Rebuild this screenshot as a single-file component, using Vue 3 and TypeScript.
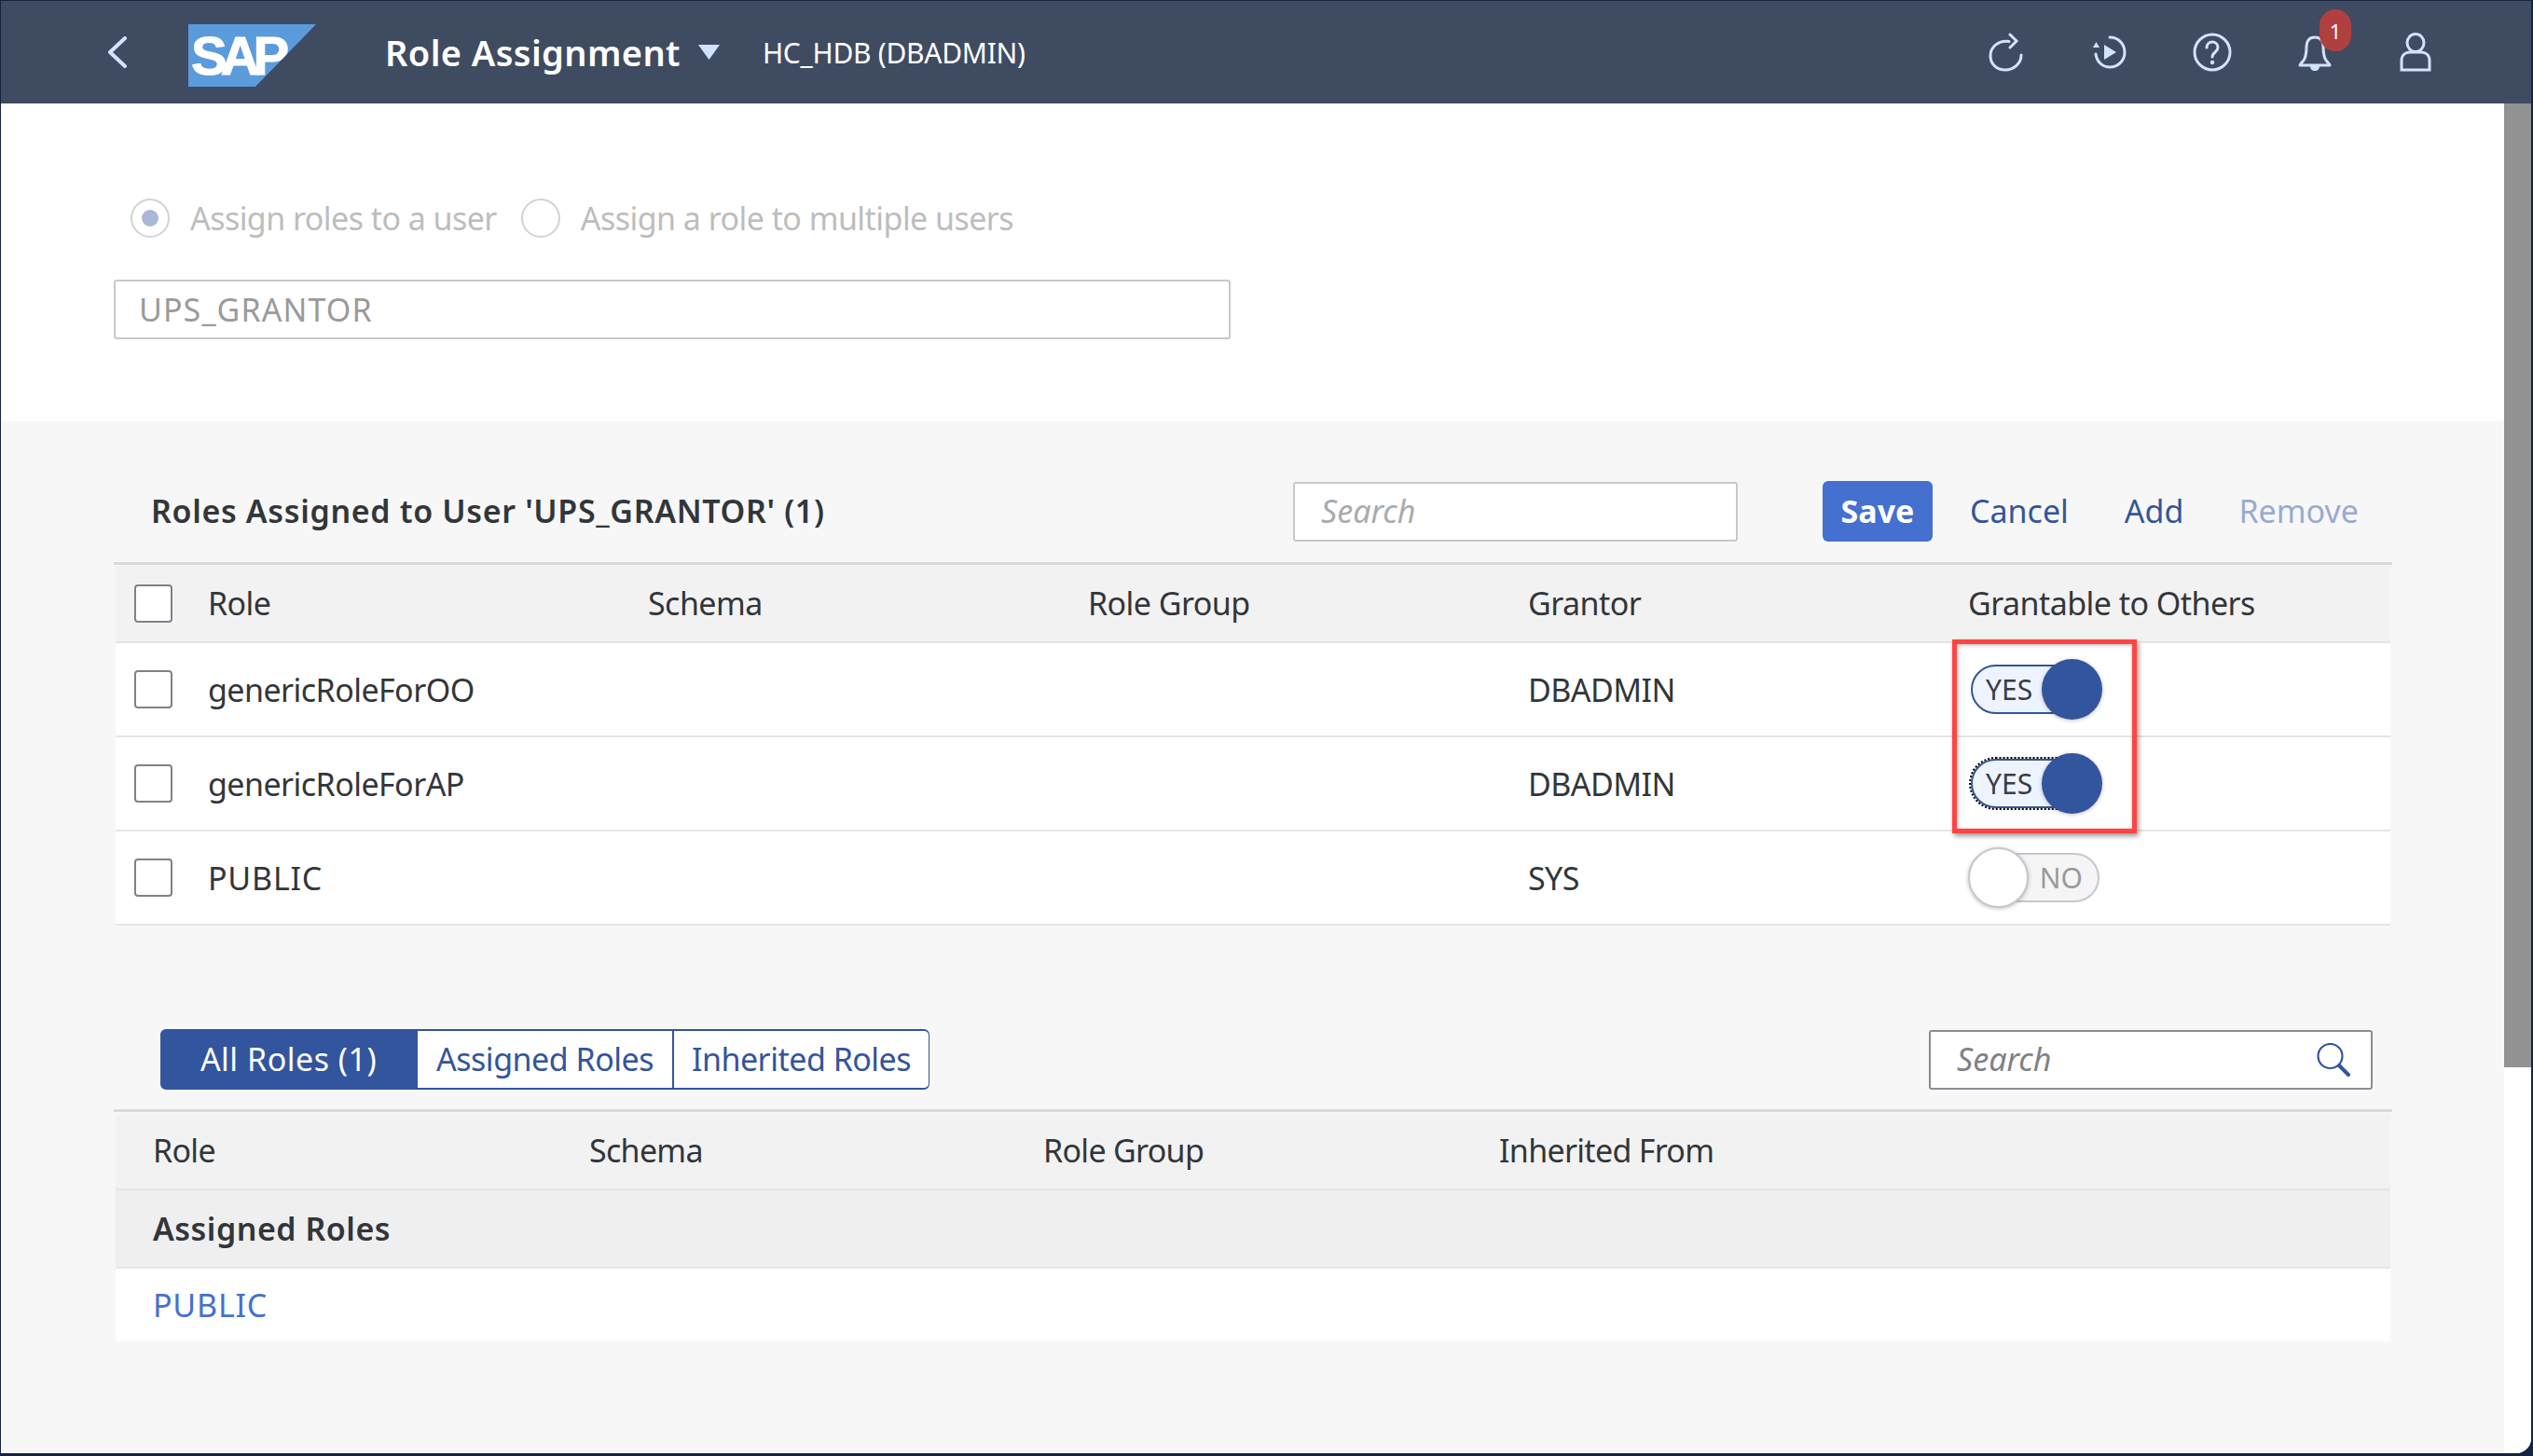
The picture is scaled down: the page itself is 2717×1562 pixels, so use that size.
<script setup lang="ts">
interface AssignedRole { name: string; grantor: string; grantable: boolean; focused?: boolean }

const columns = ['Role', 'Schema', 'Role Group', 'Grantor', 'Grantable to Others']
const roles: AssignedRole[] = [
  { name: 'genericRoleForOO', grantor: 'DBADMIN', grantable: true },
  { name: 'genericRoleForAP', grantor: 'DBADMIN', grantable: true, focused: true },
  { name: 'PUBLIC', grantor: 'SYS', grantable: false },
]
const tabs = ['All Roles (1)', 'Assigned Roles', 'Inherited Roles']
const detailColumns = ['Role', 'Schema', 'Role Group', 'Inherited From']
</script>

<template>
  <div class="window">
    <div class="frame">
      <header class="shell">
        <svg class="back" width="22" height="34" viewBox="0 0 22 34"><path d="M19 2 3 17l16 15" fill="none" stroke="#d1e3ff" stroke-width="4" stroke-linecap="round" stroke-linejoin="round" /></svg>
        <div class="logo"><span>SAP</span></div>
        <h1 class="title">Role Assignment</h1>
        <svg class="caret" width="23" height="16" viewBox="0 0 23 16"><path d="M0 0h23L11.500 16z" fill="#d1e3ff" /></svg>
        <span class="system">HC_HDB (DBADMIN)</span>
        <div class="actions">
          <svg class="ic" width="40" height="42" viewBox="0 0 40 42" fill="none" stroke="#d1e3ff" stroke-width="3" stroke-linecap="round">
            <path d="M23 9.500C12 8 3 15 3 25c0 9 7 15 16 15s17-7 17-16" />
            <path d="M24 2l7 7-7 7" />
          </svg>
          <svg class="ic" width="40" height="42" viewBox="0 0 40 42" fill="none" stroke="#d1e3ff" stroke-width="3" stroke-linecap="round">
            <path d="M21 5c9 0 16 7 16 16s-7 16-16 16c-8 0-14-6-15-14" />
            <path d="M3 16h7l-3.500-6z" fill="#d1e3ff" stroke="none" />
            <path d="M15 13l13 8-13 8z" fill="#d1e3ff" stroke="none" />
          </svg>
          <svg class="ic" width="42" height="42" viewBox="0 0 42 42" fill="none" stroke="#d1e3ff" stroke-width="3" stroke-linecap="round">
            <circle cx="21" cy="21" r="19" />
            <path d="M15 16c0-4 3-6 6-6s6 2 6 6c0 5-6 5-6 10" />
            <circle cx="21" cy="32" r="2.200" fill="#d1e3ff" stroke="none" />
          </svg>
          <div class="bell">
            <svg width="38" height="42" viewBox="0 0 38 42" fill="none" stroke="#d1e3ff" stroke-width="3" stroke-linecap="round" stroke-linejoin="round">
              <path d="M19 5c-6 0-9 4-9 10 0 9-1 13-4 16-2 2-3 3-3 4h32c0-1-1-2-3-4-3-3-4-7-4-16 0-6-3-10-9-10z" />
              <path d="M14 36h10c0 3-2 5-5 5s-5-2-5-5z" fill="#d1e3ff" stroke="none" />
            </svg>
            <span class="badge">1</span>
          </div>
          <svg class="ic user" width="34" height="42" viewBox="0 0 34 42" fill="none" stroke="#d1e3ff" stroke-width="3">
            <ellipse cx="17" cy="11" rx="9" ry="9.500" />
            <path d="M2 40V30c0-6 4-9 9-9h12c5 0 9 3 9 9v10z" />
          </svg>
        </div>
      </header>

      <div class="body">
        <main class="page">
          <section class="assign">
            <div class="radios">
              <label class="radio"><i class="dot on"></i>Assign roles to a user</label>
              <label class="radio"><i class="dot"></i>Assign a role to multiple users</label>
            </div>
            <div class="user-input">UPS_GRANTOR</div>
          </section>

          <section class="lower">
            <div class="toolbar">
              <h2 class="section-title">Roles Assigned to User 'UPS_GRANTOR' (1)</h2>
              <div class="search small">Search</div>
              <button class="save">Save</button>
              <a class="link cancel">Cancel</a>
              <a class="link add">Add</a>
              <a class="link remove">Remove</a>
            </div>

            <div class="table">
              <div class="row head">
                <i class="check"></i>
                <span v-for="c in columns" :key="c">{{ c }}</span>
              </div>
              <div class="rows">
                <div v-for="r in roles" :key="r.name" class="row">
                  <i class="check"></i>
                  <span :class="{ caps: r.name === r.name.toUpperCase() }">{{ r.name }}</span>
                  <span></span>
                  <span></span>
                  <span>{{ r.grantor }}</span>
                  <span class="cell-toggle">
                    <span class="toggle" :class="{ off: !r.grantable, focused: r.focused }">
                      <span class="track">{{ r.grantable ? 'YES' : 'NO' }}</span>
                      <span class="knob"></span>
                    </span>
                  </span>
                </div>
                <div class="callout"></div>
              </div>
            </div>

            <div class="toolbar second">
              <div class="segments">
                <button v-for="(t, i) in tabs" :key="t" class="segment" :class="{ active: i === 0 }">{{ t }}</button>
              </div>
              <div class="search big">
                <span>Search</span>
                <svg width="36" height="36" viewBox="0 0 36 36" fill="none" stroke="#33559d">
                  <circle cx="14.500" cy="14" r="13" stroke-width="2.200" />
                  <path d="M24 24l10 10" stroke-width="4" stroke-linecap="round" />
                </svg>
              </div>
            </div>

            <div class="table detail">
              <div class="drow dhead">
                <span v-for="c in detailColumns" :key="c">{{ c }}</span>
              </div>
              <div class="drow group">Assigned Roles</div>
              <div class="drow item"><a class="role-link">PUBLIC</a></div>
            </div>
          </section>
        </main>
        <div class="scrollbar"><div class="thumb"></div></div>
      </div>
    </div>
  </div>
</template>

<style>
html, body { margin: 0; background: #111; overflow: hidden; }
</style>

<style scoped>
* { box-sizing: border-box; }
.window {
  width: 2717px;
  height: 1562px;
  padding: 1px 2px 3px 1px;
  background: #14243f;
  font-family: "Noto Sans", "Open Sans", sans-serif;
  font-size: 34px;
  color: #32363a;
}
.frame {
  height: 100%;
  display: flex;
  flex-direction: column;
  border-radius: 0 0 16px 0;
  overflow: hidden;
  background: #fff;
}
.shell {
  height: 110px;
  flex: none;
  display: flex;
  align-items: center;
  background: #3f4b61;
  color: #fff;
  padding-left: 114px;
}
.back { margin-right: 65px; }
.logo {
  width: 137px;
  height: 67px;
  margin: 7px 74px 0 0;
  background: #5b9bdc;
  clip-path: polygon(0 0, 100% 0, 52.500% 100%, 0 100%);
  display: flex;
  align-items: center;
  padding-left: 3px;
}
.logo span {
  font-family: "Liberation Sans", sans-serif;
  font-weight: 700;
  font-size: 58px;
  letter-spacing: -7px;
  color: #fff;
  line-height: 1;
  -webkit-text-stroke: 1px #fff;
  filter: blur(0.6px);
}
.title { margin: 0 19px 0 0; font-size: 38px; font-weight: 600; letter-spacing: .4px; }
.caret { margin-right: 46px; }
.system { font-size: 30px; color: #fff; letter-spacing: -.3px; }
.actions { margin-left: auto; display: flex; align-items: center; gap: 70px; padding-right: 107px; }
.user { margin-left: 2px; }
.bell { position: relative; display: flex; }
.badge {
  position: absolute;
  left: 24px;
  top: -25px;
  width: 34px;
  height: 45px;
  border-radius: 17px;
  background: #b04040;
  font-size: 22px;
  display: flex;
  align-items: center;
  justify-content: center;
  color: #fff;
}
.body { flex: 1; display: flex; min-height: 0; }
.page { flex: 1; min-width: 0; display: flex; flex-direction: column; }
.scrollbar { flex: none; width: 29px; background: #fff; }
.thumb { height: 1034px; background: #929292; }

.assign { height: 341px; padding: 102px 0 0 121px; background: #fff; }
.radios { display: flex; height: 42px; align-items: center; gap: 26px; padding-left: 18px; }
.radio { display: flex; align-items: center; gap: 22px; color: #bdbdbd; letter-spacing: -.55px; }
.dot {
  width: 42px;
  height: 42px;
  border: 2px solid #d0d2d6;
  border-radius: 50%;
  display: flex;
  align-items: center;
  justify-content: center;
}
.dot.on::after { content: ""; width: 18px; height: 18px; border-radius: 50%; background: #a9b8d8; }
.user-input {
  width: 1198px;
  height: 64px;
  margin-top: 45px;
  border: 2px solid #c5c9cf;
  border-radius: 3px;
  padding-left: 25px;
  display: flex;
  align-items: center;
  color: #9a9a9a;
  letter-spacing: 1.100px;
}

.lower { flex: 1; background: #f7f7f7; padding: 64px 120px 0 121px; }
.toolbar { display: flex; align-items: center; height: 65px; }
.section-title { margin: 0 0 2px 40px; width: 1225px; font-size: 34px; font-weight: 600; letter-spacing: .65px; }
.search {
  display: flex;
  align-items: center;
  background: #fff;
  border: 2px solid #c5c9cf;
  border-radius: 3px;
  height: 64px;
  padding: 0 0 2px 28px;
  font-style: italic;
  color: #a8abae;
}
.search.small { width: 477px; margin-right: 91px; }
.save {
  width: 118px;
  height: 65px;
  border: none;
  border-radius: 6px;
  background: #4470d0;
  color: #fff;
  font: 700 34px "Noto Sans", sans-serif;
  padding: 0 0 2px;
  margin-right: 40px;
}
.link { color: #33559d; margin-bottom: 2px; }
.cancel { margin-right: 60px; }
.add { margin-right: 59px; }
.remove { color: #99abd1; }

.table { margin-top: 22px; border-top: 3px solid #d9d9d9; padding: 1px 2px 0; }
.row {
  display: grid;
  grid-template-columns: 79px repeat(4, 472px) 1fr;
  align-items: center;
  height: 101px;
  padding-left: 20px;
  background: #fff;
  border-bottom: 2px solid #e5e5e5;
  letter-spacing: -.55px;
}
.row .caps { letter-spacing: .8px; }
.row.head { height: 83px; padding-bottom: 1px; background: #f2f2f2; }
.rows .row:last-of-type { border-bottom: none; }
.rows { position: relative; }
.check {
  width: 41px;
  height: 41px;
  border: 2px solid #7f8289;
  border-radius: 4px;
  background: #fff;
}
.cell-toggle { display: flex; margin-left: 1px; }
.toggle { position: relative; display: block; width: 143px; height: 53px; letter-spacing: 0; }
.track {
  position: absolute;
  left: 2px;
  right: 16px;
  top: 0;
  bottom: 0;
  border: 2px solid #33559d;
  border-radius: 27px;
  background: #eef4ff;
  padding-left: 14px;
  display: flex;
  align-items: center;
  font-size: 30px;
  color: #3a3d42;
}
.knob {
  position: absolute;
  right: 0;
  top: -6px;
  width: 65px;
  height: 65px;
  border-radius: 50%;
  background: #33559d;
  box-shadow: 0 1px 4px rgba(0, 0, 0, .25);
}
.toggle.focused .track { outline: 2px dotted #000; }
.toggle.off .track {
  left: 16px;
  right: 3px;
  border-color: #c5c8cf;
  background: #f5f5f5;
  color: #9a9a9a;
  justify-content: flex-end;
  padding: 0 16px 0 0;
}
.toggle.off .knob { left: -1px; right: auto; background: #fff; border: 2px solid #c5c8cf; }
.callout {
  position: absolute;
  left: 1970px;
  top: -4px;
  width: 198px;
  height: 208px;
  border: 5px solid #ff4444;
  box-shadow: 2px 3px 5px rgba(0, 0, 0, .4), inset 1px 1px 4px rgba(0, 0, 0, .3);
  pointer-events: none;
}

.second { margin-top: 111px; justify-content: space-between; padding: 0 21px 0 50px; }
.segments { display: flex; }
.segment {
  width: 275px;
  height: 65px;
  background: #fff;
  border: 2px solid #33559d;
  border-left-width: 1px;
  border-right-width: 1px;
  font: 34px "Noto Sans", sans-serif;
  letter-spacing: -.5px;
  color: #33559d;
  padding: 0 0 2px;
}
.segment:first-child { border-radius: 6px 0 0 6px; }
.segment:last-child { border-radius: 0 6px 6px 0; }
.segment.active { background: #33559d; color: #fff; letter-spacing: .5px; }
.search.big { width: 476px; border-color: #8a8d96; justify-content: space-between; padding-right: 22px; color: #7f8185; }
.search.big svg { flex: none; margin-top: 2px; }

.detail { margin-top: 21px; padding-top: 2px; }
.drow { height: 84px; display: flex; align-items: center; padding-left: 40px; border-bottom: 2px solid #e5e5e5; }
.dhead { height: 82px; padding-bottom: 2px; background: #f2f2f2; display: grid; grid-template-columns: 468px 487px 489px 1fr; letter-spacing: -.7px; }
.group { background: #efefef; font-weight: 600; letter-spacing: .5px; }
.item { height: 78px; background: #fff; border-bottom: none; }
.role-link { color: #4470d0; letter-spacing: .8px; }
</style>
